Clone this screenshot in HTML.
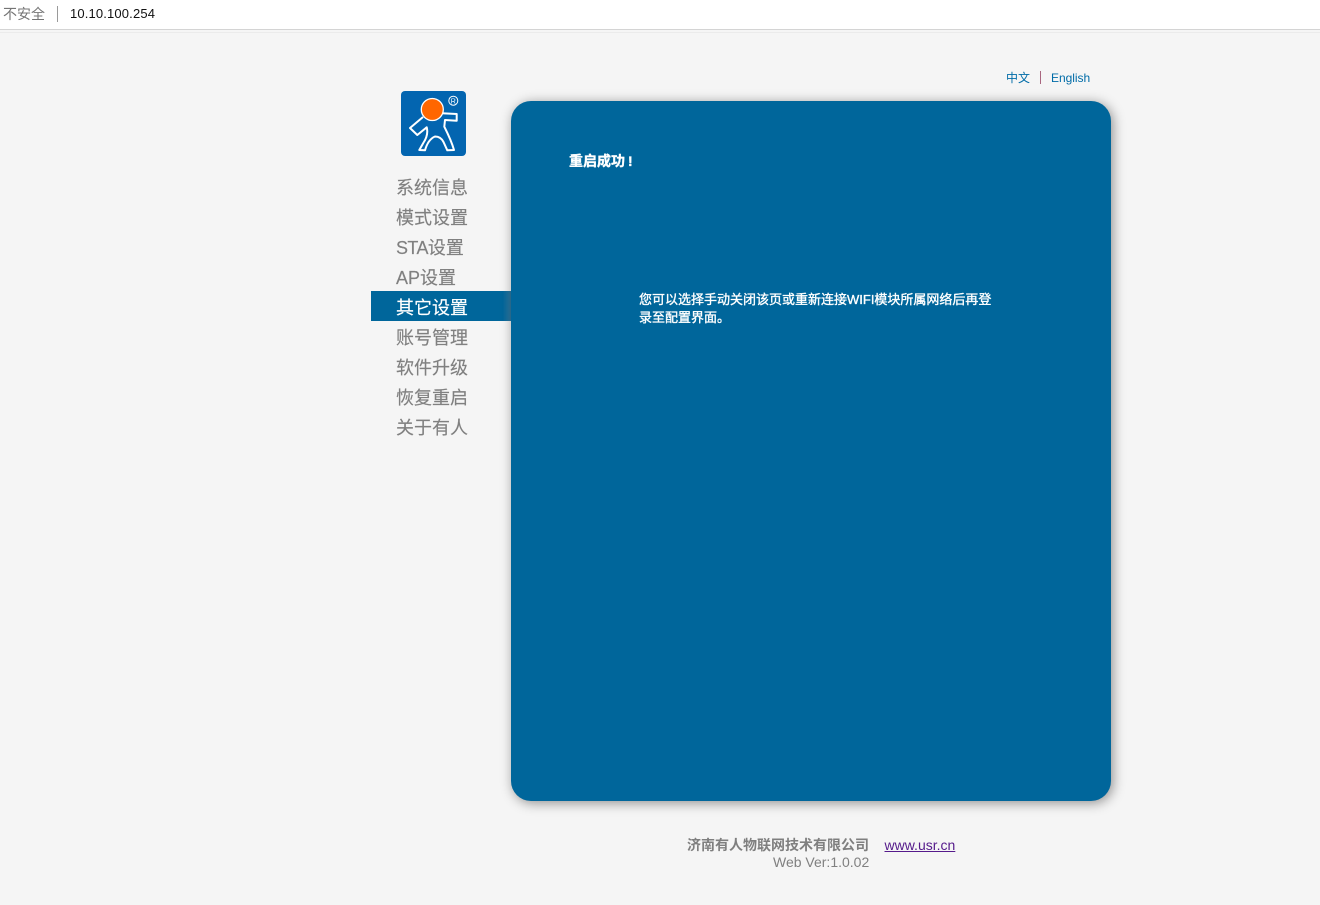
<!DOCTYPE html>
<html lang="zh">
<head>
<meta charset="utf-8">
<title>USR</title>
<style>
html,body{margin:0;padding:0;}
body{width:1320px;height:905px;position:relative;overflow:hidden;background:#f5f5f5;font-family:"Liberation Sans","Noto Sans CJK SC",sans-serif;}
.abs{position:absolute;white-space:nowrap;}
#bar{position:absolute;left:0;top:0;width:1320px;height:29px;background:#fff;border-bottom:1px solid #d4d4d4;}
#line2{position:absolute;left:0;top:32px;width:1320px;height:1px;background:#ebebeb;}
#sep{position:absolute;left:57px;top:6px;width:1px;height:16px;background:#9a9a9a;}
#panel{position:absolute;left:511px;top:101px;width:600px;height:700px;background:#00669b;border-radius:20px;box-shadow:2px 2px 12px rgba(0,0,0,.42);}
.m{position:absolute;left:371px;width:140px;height:30px;line-height:34px;padding-left:25px;box-sizing:border-box;font-size:18px;color:#808080;white-space:nowrap;-webkit-text-stroke:.15px #808080;}
.m span{letter-spacing:-.6px;}
.m.on{background:linear-gradient(90deg,#00669b 94%,#2f7aa3 100%);color:#fff;-webkit-text-stroke:.15px #fff;}
.b{-webkit-text-stroke:.35px #fff;color:#fff;}
</style>
</head>
<body>
<div id="bar"></div>
<div id="line2"></div>
<div class="abs" style="left:3px;top:5px;font-size:14px;line-height:18px;color:#757575;">不安全</div>
<div id="sep"></div>
<div class="abs" style="left:70px;top:5px;font-size:13px;line-height:18px;color:#111;letter-spacing:.15px;">10.10.100.254</div>

<div class="abs" style="left:1006px;top:70px;font-size:12px;line-height:16px;color:#006ca8;">中文</div>
<div class="abs" style="left:1040px;top:71px;width:1px;height:13px;background:#a9667f;"></div>
<div class="abs" style="left:1051px;top:70px;font-size:12px;line-height:16px;color:#006ca8;letter-spacing:-.03px;">English</div>

<svg class="abs" style="left:401px;top:91px;" width="65" height="65" viewBox="0 0 65 65">
<rect width="65" height="65" rx="4" fill="#0365b0"/>
<path d="M22 26 L9 37 L16.300 44 L25.700 36.300 C27.500 43 25 48 22.300 52 L18.300 59 L24 59.300 C25.500 54 28 48 34 45.500 C38 45.500 41 48 42.500 51 L46.300 59.300 L53 59 C51 52 47.500 44 43.300 35.700 L44 29 L55.700 29.700 L55.700 23 L40.700 22.300" fill="none" stroke="#fff" stroke-width="2" stroke-linejoin="round"/>
<circle cx="31.300" cy="18.500" r="11" fill="#ff6600" stroke="#fff" stroke-width="1.300"/>
<circle cx="52.300" cy="9.700" r="4.500" fill="none" stroke="#fff" stroke-width="1"/>
<text x="52.300" y="12.300" font-size="7" fill="#fff" text-anchor="middle" font-family="Liberation Sans, sans-serif">R</text>
</svg>

<div class="m" style="top:171px;">系统信息</div>
<div class="m" style="top:201px;">模式设置</div>
<div class="m" style="top:231px;"><span>STA</span>设置</div>
<div class="m" style="top:261px;">AP设置</div>
<div class="m on" style="top:291px;">其它设置</div>
<div class="m" style="top:321px;">账号管理</div>
<div class="m" style="top:351px;">软件升级</div>
<div class="m" style="top:381px;">恢复重启</div>
<div class="m" style="top:411px;">关于有人</div>

<div id="panel"></div>
<div class="abs b" style="left:569px;top:152px;font-size:14px;line-height:18px;font-weight:bold;">重启成功<span style="margin-left:3px;">!</span></div>
<div class="abs b" style="left:639px;top:291px;width:360px;white-space:normal;font-size:13px;line-height:18px;">您可以选择手动关闭该页或重新连接WIFI模块所属网络后再登<br>录至配置界面。</div>

<div class="abs" style="left:687px;top:836px;font-size:14px;line-height:18px;font-weight:bold;color:#7f7f7f;">济南有人物联网技术有限公司</div>
<div class="abs" style="left:884.500px;top:836px;font-size:14px;line-height:18px;color:#551a8b;text-decoration:underline;">www.usr.cn</div>
<div class="abs" style="left:773px;top:853px;font-size:14px;line-height:18px;color:#808080;">Web Ver:1.0.02</div>
</body>
</html>
